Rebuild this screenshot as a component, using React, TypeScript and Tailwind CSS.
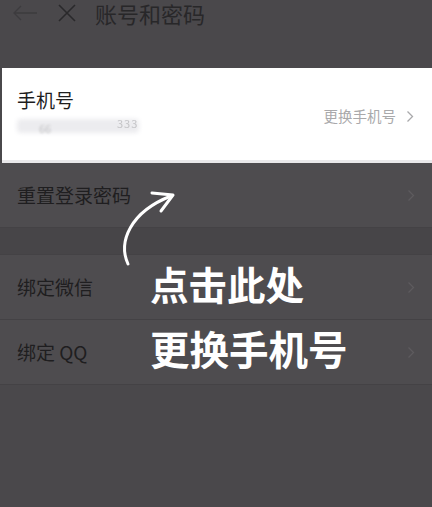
import React from 'react';

const font = { fontFamily: '"Noto Sans CJK SC", "Noto Sans", sans-serif' };

function Chevron({ className }: { className?: string }) {
  return (
    <svg width="8" height="13" viewBox="0 0 8 13" fill="none" className={className}>
      <path d="M1.5 1.5 L6.5 6.5 L1.5 11.5" stroke="currentColor" strokeWidth="1.3" />
    </svg>
  );
}

function Row({ label }: { label: string }) {
  return (
    <div className="flex items-center justify-between h-[65px] px-[17px] bg-[#4e4c4f] border-b border-[#444245]">
      <span className="text-[19px] text-[#1f1e20]">{label}</span>
      <Chevron className="text-[#5d5b5e]" />
    </div>
  );
}

export default function App() {
  return (
    <div className="relative w-[432px] h-[507px] overflow-hidden bg-[#4a484b]" style={font}>
      {/* header, cut at the top */}
      <div className="flex items-start h-[68px] pt-[1px] pl-[12px]">
        <svg width="26" height="18" viewBox="0 0 26 18" fill="none" className="mt-[3px] text-[#3d3b3e]">
          <path d="M25 9 H2 M9 2 L2 9 L9 16" stroke="currentColor" strokeWidth="1.3" />
        </svg>
        <svg width="20" height="20" viewBox="0 0 20 20" fill="none" className="mt-[2px] ml-[19px] text-[#2a292b]">
          <path d="M2 2 L18 18 M18 2 L2 18" stroke="currentColor" strokeWidth="1.6" />
        </svg>
        <span className="ml-[18px] text-[22px] leading-[24px] text-[#282729]">账号和密码</span>
      </div>

      {/* highlighted phone row */}
      <div className="ml-[2px] h-[95px] bg-white border-b-[3px] border-[#e9e8ea] flex items-center justify-between pl-[15px] pr-[18px]">
        <div className="flex flex-col pb-[6px]">
          <span className="text-[19px] leading-[24px] text-[#1e1e1e]">手机号</span>
          <div className="relative mt-[6px] h-[16px] w-[125px]">
            <div className="absolute left-0 top-[1px] h-[14px] w-[122px] rounded-sm bg-[#ececef] blur-[2px]" />
            <span className="absolute left-[100px] top-[-3px] text-[11px] tracking-[1px] text-[#c4c4c7] blur-[0.5px]">333</span>
            <span className="absolute left-[22px] top-[2px] text-[11px] text-[#c4c4c6] blur-[0.8px]">66</span>
          </div>
        </div>
        <div className="flex items-center gap-[10px] pt-[4px]">
          <span className="text-[14.5px] text-[#a9a9ab]">更换手机号</span>
          <Chevron className="text-[#a9a9ab]" />
        </div>
      </div>

      <Row label="重置登录密码" />
      <div className="h-[27px] bg-[#474548] border-b border-[#444245]" />
      <Row label="绑定微信" />
      <Row label="绑定 QQ" />

      {/* annotation overlay */}
      <svg width="432" height="507" viewBox="0 0 432 507" fill="none" className="absolute inset-0 pointer-events-none">
        <path d="M128 264 C 118 242, 130 212, 171 196" stroke="white" strokeWidth="3" strokeLinecap="round" />
        <path d="M152 193 L173 195 L161 211" stroke="white" strokeWidth="3" strokeLinecap="round" strokeLinejoin="round" />
      </svg>
      <div className="absolute left-[150px] top-[264px] flex flex-col text-white font-semibold leading-none">
        <span className="text-[38.5px]">点击此处</span>
        <span className="mt-[25px] text-[39.5px]">更换手机号</span>
      </div>
    </div>
  );
}
